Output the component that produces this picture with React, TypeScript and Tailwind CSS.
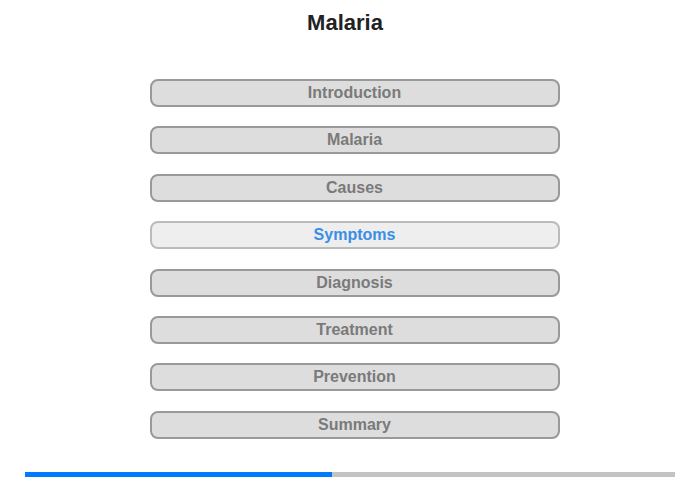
const topics = ['Introduction', 'Malaria', 'Causes', 'Symptoms', 'Diagnosis', 'Treatment', 'Prevention', 'Summary'];

export default function App() {
  const current = 'Symptoms';

  return (
    <div className="w-[700px] h-[480px] bg-white font-['Liberation_Sans',Arial,sans-serif] flex flex-col items-center">
      <h1 className="mt-[9px] mr-[10px] text-[22px] leading-[28px] font-bold text-[#222]">Malaria</h1>
      <div className="mt-[42px] ml-[9px] flex flex-col gap-[19.4px]">
        {topics.map((t) => (
          <button
            key={t}
            className={
              t === current
                ? 'w-[410px] h-[28px] rounded-[8px] border-2 border-[#bbb] bg-[#eee] text-[#3a8ee8] text-[16px] leading-[24px] font-bold'
                : 'w-[410px] h-[28px] rounded-[8px] border-2 border-[#999] bg-[#ddd] text-[#7a7a7a] text-[16px] leading-[24px] font-bold'
            }
          >
            {t}
          </button>
        ))}
      </div>
      <div className="mt-auto mb-[3px] w-[650px] h-[5px] bg-[#c3c3c3] flex">
        <div className="w-[307px] h-full bg-[#007bff]" />
      </div>
    </div>
  );
}
